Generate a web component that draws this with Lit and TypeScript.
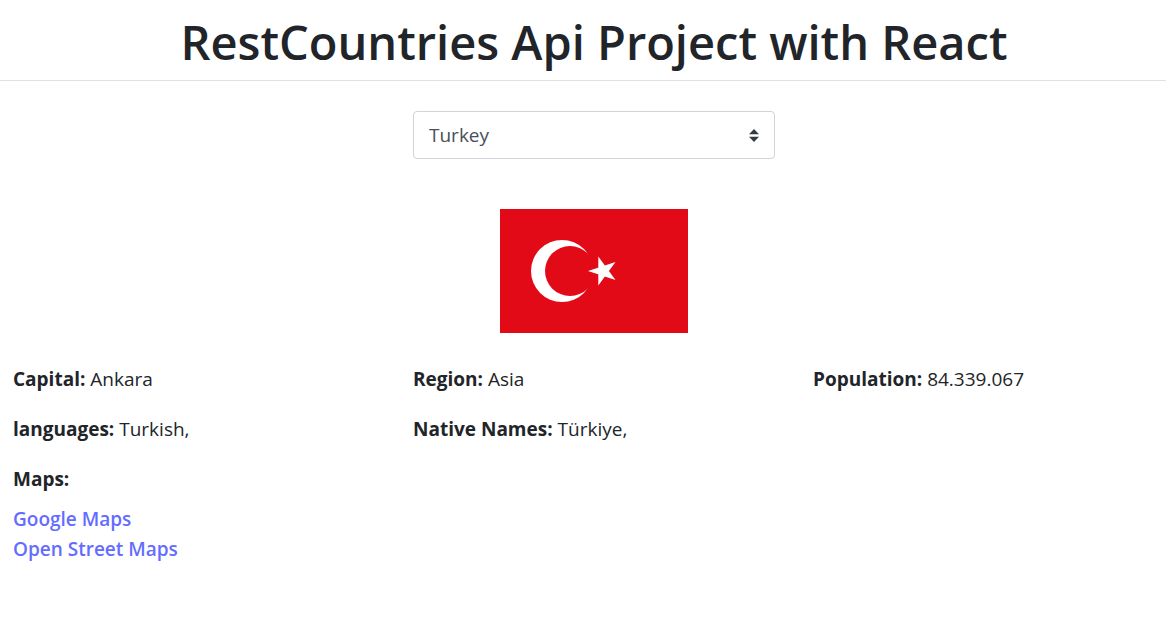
import { LitElement, html, css } from "lit";
import { customElement, state } from "lit/decorators.js";

interface Country {
  name: string;
  capital: string;
  region: string;
  population: string;
  languages: string[];
  nativeNames: string[];
}

const COUNTRIES: Country[] = [
  {
    name: "Turkey",
    capital: "Ankara",
    region: "Asia",
    population: "84.339.067",
    languages: ["Turkish"],
    nativeNames: ["Türkiye"],
  },
];

@customElement("app-root")
export class AppRoot extends LitElement {
  static styles = css`
    :host {
      display: block;
      overflow: hidden;
      color: #212529;
      font-family: "Open Sans", "Noto Sans", sans-serif;
      font-size: 19px;
      line-height: 30px;
    }
    *,
    *::before,
    *::after {
      box-sizing: border-box;
    }
    .content {
      /* the rows bleed past the right edge of the page */
      margin-right: -22px;
    }
    .title {
      margin: 0;
      padding: 12px 0 8px;
      border-bottom: 1px solid #dee2e6;
      font-size: 47px;
      line-height: 60px;
      font-weight: 600;
      text-align: center;
    }
    .page {
      padding: 30px 13px 0;
      display: grid;
      grid-template-columns: repeat(3, 1fr);
      column-gap: 38px;
    }
    .picker {
      grid-column: 2;
      position: relative;
    }
    .select {
      display: block;
      width: 100%;
      height: 48px;
      padding: 8px 32px 8px 15px;
      border: 1px solid #ced4da;
      border-radius: 4px;
      background: #fff;
      color: #495057;
      font: inherit;
      appearance: none;
    }
    .arrows {
      position: absolute;
      right: 15px;
      top: 18px;
      width: 12px;
      height: 13px;
      pointer-events: none;
    }
    .flag {
      grid-column: 2;
      justify-self: center;
      display: block;
      width: 188px;
      height: 124px;
      margin: 50px 0 31px;
    }
    .fact {
      margin: 0 0 20px;
    }
    .first {
      grid-column: 1;
    }
    .label {
      font-weight: 700;
    }
    .maps {
      grid-column: 1;
    }
    .heading {
      margin: 0 0 10px;
    }
    .link {
      display: block;
      width: fit-content;
      color: #646cff;
      font-weight: 600;
      text-decoration: none;
    }
  `;

  @state() private selected = COUNTRIES[0].name;

  private pick(e: Event) {
    this.selected = (e.target as HTMLSelectElement).value;
  }

  render() {
    const c = COUNTRIES.find((x) => x.name === this.selected) ?? COUNTRIES[0];
    return html`
      <div class="content">
        <h1 class="title">RestCountries Api Project with React</h1>
        <main class="page">
          <div class="picker">
            <select class="select" aria-label="Country" @change=${this.pick}>
              ${COUNTRIES.map((x) => html`<option>${x.name}</option>`)}
            </select>
            <svg class="arrows" viewBox="0 0 12 13" aria-hidden="true">
              <path fill="#343a40" d="M6 0L1 5.2h10zM6 13L1 7.8h10z" />
            </svg>
          </div>
          <svg class="flag" viewBox="0 0 188 124" role="img" aria-label="Flag of Turkey">
            <path fill="#e30a17" d="M0 0h188v124H0z" />
            <circle cx="62" cy="62" r="31" fill="#fff" />
            <circle cx="70" cy="62" r="25" fill="#e30a17" />
            <path fill="#fff" d="M88 62L115.5 53L98.3 76.5V47.5L115.5 71z" />
          </svg>
          <p class="fact first"><span class="label">Capital:</span> ${c.capital}</p>
          <p class="fact"><span class="label">Region:</span> ${c.region}</p>
          <p class="fact"><span class="label">Population:</span> ${c.population}</p>
          <p class="fact first"><span class="label">languages:</span> ${c.languages.map((l) => `${l},`)}</p>
          <p class="fact"><span class="label">Native Names:</span> ${c.nativeNames.map((n) => `${n},`)}</p>
          <div class="maps">
            <p class="heading"><span class="label">Maps:</span></p>
            <a class="link" href="#google">Google Maps</a>
            <a class="link" href="#osm">Open Street Maps</a>
          </div>
        </main>
      </div>
    `;
  }
}
